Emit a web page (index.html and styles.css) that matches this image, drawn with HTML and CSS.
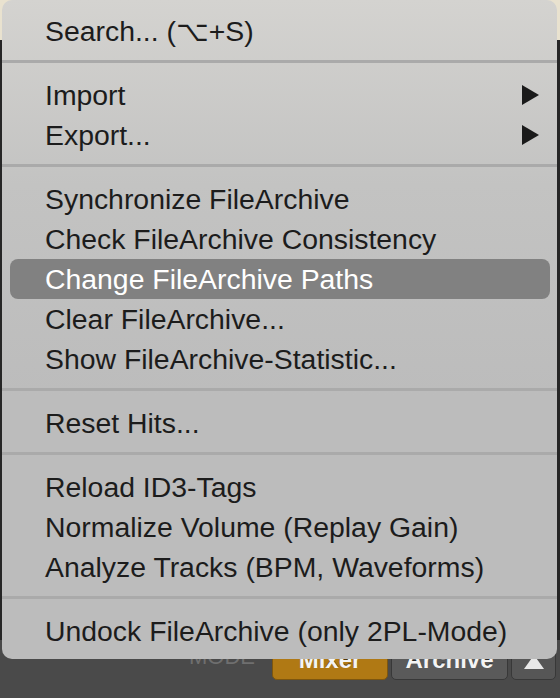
FILE: index.html
```html
<!DOCTYPE html>
<html>
<head>
<meta charset="utf-8">
<link rel="stylesheet" href="styles.css">
</head>
<body>
<div class="app">
  <div class="topbar"></div>
  <div class="content"></div>
  <div class="footer">
    <span class="mode-label">MODE</span>
    <div class="mode-btn mixer">Mixer</div>
    <div class="mode-btn archive">Archive</div>
    <div class="mode-btn up"><svg width="22" height="16" viewBox="0 0 22 16"><polygon points="11,1 21,15 1,15" fill="#e8e8e8"/></svg></div>
  </div>
</div>

<div class="menu">
  <div class="item">Search... (⌥+S)</div>
  <div class="sep"></div>
  <div class="item sub">Import <svg class="arrow" width="17" height="20" viewBox="0 0 17 20"><polygon points="0,0 17,10 0,20" fill="#1a1a1a"/></svg></div>
  <div class="item sub">Export... <svg class="arrow" width="17" height="20" viewBox="0 0 17 20"><polygon points="0,0 17,10 0,20" fill="#1a1a1a"/></svg></div>
  <div class="sep"></div>
  <div class="item">Synchronize FileArchive</div>
  <div class="item">Check FileArchive Consistency</div>
  <div class="item active">Change FileArchive Paths</div>
  <div class="item">Clear FileArchive...</div>
  <div class="item">Show FileArchive-Statistic...</div>
  <div class="sep"></div>
  <div class="item">Reset Hits...</div>
  <div class="sep"></div>
  <div class="item">Reload ID3-Tags</div>
  <div class="item">Normalize Volume (Replay Gain)</div>
  <div class="item">Analyze Tracks (BPM, Waveforms)</div>
  <div class="sep"></div>
  <div class="item">Undock FileArchive (only 2PL-Mode)</div>
</div>
</body>
</html>
```

FILE: styles.css
```css
html, body {
  margin: 0;
  padding: 0;
}
body {
  width: 560px;
  height: 698px;
  overflow: hidden;
  position: relative;
  background: #474747;
  font-family: "Liberation Sans", "DejaVu Sans", sans-serif;
}
.app {
  display: flex;
  flex-direction: column;
  height: 698px;
}
.topbar {
  height: 40px;
  background: #e9e2cf;
}
.content {
  flex: 1;
  background: #262626;
}
.footer {
  height: 58px;
  background: #4a4a4a;
  display: flex;
  align-items: flex-end;
  justify-content: flex-end;
  gap: 3px;
  padding: 0 4px 18px 0;
  box-sizing: border-box;
}
.mode-label {
  color: #6f6f6f;
  font-size: 22px;
  align-self: flex-end;
  margin-right: 14px;
  margin-bottom: 10px;
}
.mode-btn {
  height: 34px;
  box-sizing: border-box;
  border-radius: 5px;
  color: #f4f4f4;
  font-weight: bold;
  font-size: 24px;
  display: flex;
  align-items: center;
  justify-content: center;
  padding-bottom: 6px;
  text-shadow: 0 -1px 0 rgba(0,0,0,0.55);
}
.mixer {
  width: 116px;
  background: #b07914;
  border: 1px solid #7d560f;
}
.archive {
  width: 117px;
  background: #5a5a5a;
  border: 1px solid #383838;
}
.up {
  width: 45px;
  background: #565656;
  border: 1px solid #383838;
  padding-bottom: 0;
  align-items: flex-end;
}
.up svg {
  display: block;
  margin-bottom: 9px;
}
.menu {
  position: absolute;
  left: 2px;
  top: 0;
  width: 555px;
  height: 659px;
  box-sizing: border-box;
  padding: 11px 0 8px 0;
  border-radius: 10px;
  background: linear-gradient(to bottom, #d4d3d0 0%, #c3c3c2 28%, #bcbcbc 60%, #bcbcbc 100%);
}
.item {
  height: 40px;
  line-height: 40px;
  font-size: 28.4px;
  color: #1c1c1c;
  padding-left: 43px;
  display: flex;
  align-items: center;
  white-space: nowrap;
}
.sub {
  justify-content: space-between;
  padding-right: 18px;
}
.arrow {
  display: block;
}
.active {
  background: #818181;
  color: #ffffff;
  border-radius: 8px;
  margin: 0 7px 0 8px;
  padding-left: 35px;
}
.sep {
  height: 3px;
  background: #aaaaaa;
  margin: 9px 0 12px 0;
}
```
